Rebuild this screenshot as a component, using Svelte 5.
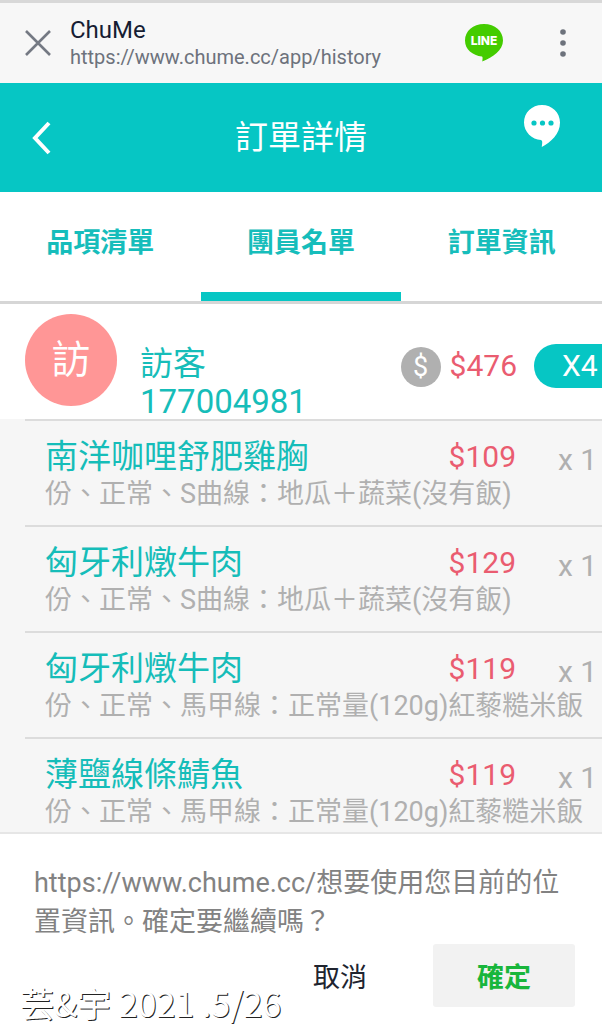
<script lang="ts">
  const tabs = ['品項清單', '團員名單', '訂單資訊'];
  let activeTab = $state(1);
  let askLocation = $state(true);

  const member = { name: '訪客 177004981', total: 476, count: 4 };

  const items = [
    { name: '南洋咖哩舒肥雞胸', note: '份、正常、S曲線：地瓜＋蔬菜(沒有飯)', price: 109, qty: 1 },
    { name: '匈牙利燉牛肉', note: '份、正常、S曲線：地瓜＋蔬菜(沒有飯)', price: 129, qty: 1 },
    { name: '匈牙利燉牛肉', note: '份、正常、馬甲線：正常量(120g)紅藜糙米飯', price: 119, qty: 1 },
    { name: '薄鹽線條鯖魚', note: '份、正常、馬甲線：正常量(120g)紅藜糙米飯', price: 119, qty: 1 },
  ];
</script>

<div class="app">
  <header class="browser">
    <button class="icon" aria-label="關閉">
      <svg width="26" height="26" viewBox="0 0 26 26">
        <path d="M1 1L25 25M25 1L1 25" stroke="#747983" stroke-width="2.6" fill="none" />
      </svg>
    </button>
    <div class="page-info">
      <div class="site">ChuMe</div>
      <div class="url">https://www.chume.cc/app/history</div>
    </div>
    <button class="icon" aria-label="LINE">
      <svg width="40" height="38" viewBox="0 0 40 38">
        <path d="M20 0C9 0 1 7 1 16.500C1 25.500 8.500 31.500 18 32.500C19 33 18.500 35 18.300 37.500C29 33 39 26 39 16.500C39 7 31 0 20 0Z" fill="#4c0" />
        <text x="20" y="21" text-anchor="middle" font-family="Inter, sans-serif" font-weight="800" font-size="12" fill="#fff">LINE</text>
      </svg>
    </button>
    <button class="icon more" aria-label="更多">
      <svg width="6" height="28" viewBox="0 0 6 28" fill="#6d727c">
        <circle cx="3" cy="3" r="2.800" />
        <circle cx="3" cy="14" r="2.800" />
        <circle cx="3" cy="25" r="2.800" />
      </svg>
    </button>
  </header>

  <div class="title-bar">
    <button class="icon" aria-label="返回">
      <svg width="20" height="36" viewBox="0 0 20 36">
        <path d="M17 3L3 18L17 33" stroke="#fff" stroke-width="4" fill="none" />
      </svg>
    </button>
    <h1>訂單詳情</h1>
    <button class="icon chat" aria-label="訊息">
      <svg width="38" height="44" viewBox="0 0 38 44">
        <path d="M19 1C9 1 1 8.500 1 18.500C1 28 9 35.500 18 36C20 37 19 40 18.800 43C28 38 37 30 37 18.500C37 8.500 29 1 19 1Z" fill="#fff" />
        <g fill="#06c6c4">
          <circle cx="11" cy="19" r="2.600" />
          <circle cx="19.500" cy="19" r="2.600" />
          <circle cx="28" cy="19" r="2.600" />
        </g>
      </svg>
    </button>
  </div>

  <nav class="tabs">
    {#each tabs as tab, i}
      <button class:active={activeTab === i} onclick={() => (activeTab = i)}>{tab}</button>
    {/each}
  </nav>

  <main>
    <section class="member">
      <div class="avatar">訪</div>
      <div class="member-row">
        <h2>{member.name}</h2>
        <span class="coin">$</span>
        <span class="price">${member.total}</span>
        <span class="count">X{member.count}</span>
      </div>
    </section>

    <ul class="items">
      {#each items as item}
        <li>
          <div class="line">
            <h3>{item.name}</h3>
            <span class="price">${item.price}</span>
            <span class="qty">x {item.qty}</span>
          </div>
          <p>{item.note}</p>
        </li>
      {/each}
    </ul>
  </main>

  {#if askLocation}
    <div class="prompt" role="dialog" aria-labelledby="prompt-text">
      <p id="prompt-text">https://www.chume.cc/想要使用您目前的位置資訊。確定要繼續嗎？</p>
      <div class="actions">
        <button onclick={() => (askLocation = false)}>取消</button>
        <button class="ok" onclick={() => (askLocation = false)}>確定</button>
      </div>
    </div>
  {/if}

  <div class="signature">芸&amp;宇 2021 .5/26</div>
</div>

<style>
  :global(body) {
    margin: 0;
    background: #fff;
  }

  .app {
    position: relative;
    display: flex;
    flex-direction: column;
    min-height: 100vh;
    overflow-x: clip;
    font-family: Roboto, 'Noto Sans CJK TC', sans-serif;
  }

  button {
    padding: 0;
    border: none;
    background: none;
    font-family: inherit;
    cursor: pointer;
  }

  h1, h2, h3, p, ul {
    margin: 0;
    padding: 0;
    font-weight: 400;
  }

  .icon {
    display: flex;
    flex: none;
  }

  .browser {
    display: flex;
    align-items: center;
    box-sizing: border-box;
    height: 83px;
    padding: 0 36px 0 25px;
    border-top: 3px solid #d8d8d8;
    background: #f7f7f7;
  }

  .page-info {
    flex: 1;
    min-width: 0;
    margin-left: 19px;
  }

  .site {
    font-size: 24px;
    line-height: 28px;
    color: #161d33;
  }

  .url {
    font-size: 20px;
    line-height: 26px;
    color: #6d727c;
  }

  .more {
    margin-left: 56px;
  }

  .title-bar {
    display: flex;
    align-items: center;
    box-sizing: border-box;
    height: 109px;
    padding: 0 41px 0 32px;
    background: #06c6c4;
  }

  h1 {
    flex: 1;
    margin-left: 27px;
    font-size: 33px;
    line-height: 48px;
    text-align: center;
    color: #fff;
  }

  .chat {
    margin-bottom: 24px;
  }

  .tabs {
    display: flex;
    border-bottom: 3px solid #d6d6d6;
    background: #fff;
  }

  .tabs button {
    flex: 1;
    height: 109px;
    padding-bottom: 4px;
    border-bottom: 9px solid transparent;
    font-size: 27px;
    font-weight: 700;
    color: #16bdbb;
  }

  .tabs .active {
    border-bottom-color: #06c6c4;
  }

  .member {
    display: flex;
    height: 115px;
    padding-left: 25px;
    background: #fff;
  }

  .avatar {
    flex: none;
    width: 92px;
    height: 92px;
    margin: 10px 23px 0 0;
    border-radius: 50%;
    background: #ff9696;
    font-size: 39px;
    line-height: 92px;
    text-align: center;
    color: #fff;
  }

  /* the count pill runs past the right edge */
  .member-row {
    display: flex;
    flex: 1;
    align-items: flex-start;
    min-width: 0;
    margin-right: -28px;
    padding-top: 40px;
  }

  h2 {
    width: 200px;
    margin: 1px auto 0 0;
    font-size: 33px;
    line-height: 38px;
    color: #16bdb9;
  }

  .coin {
    width: 40px;
    margin: 3px 9px 0 0;
    border-radius: 50%;
    background: #b0b0b0;
    font-size: 27px;
    line-height: 40px;
    text-align: center;
    color: #fff;
  }

  .price {
    font-size: 30px;
    line-height: 44px;
    color: #ea5c70;
  }

  .count {
    width: 68px;
    margin-left: 17px;
    padding-left: 28px;
    border-radius: 22px;
    background: #06c6c4;
    font-size: 30px;
    line-height: 44px;
    color: #fff;
  }

  .items {
    background: #f6f6f6;
    list-style: none;
  }

  li {
    box-sizing: border-box;
    height: 106px;
    margin-left: 25px;
    padding: 17px 8px 0 20px;
    border-top: 2px solid #dcdcdc;
  }

  li:last-child {
    height: 95px;
  }

  .line {
    display: flex;
    align-items: center;
    height: 38px;
  }

  h3 {
    flex: 1;
    font-size: 33px;
    line-height: 38px;
    color: #16bdb9;
  }

  .qty {
    width: 36px;
    margin-left: 42px;
    padding-top: 4px;
    font-size: 30px;
    color: #b0b0b0;
    white-space: nowrap;
  }

  li p {
    font-size: 27px;
    line-height: 36px;
    color: #b0b0b0;
    white-space: nowrap;
  }

  .prompt {
    flex: 1;
    padding: 30px 27px 17px 34px;
    border-top: 2px solid #e6e6e6;
    background: #fff;
  }

  .prompt p {
    font-size: 27px;
    line-height: 39px;
    color: #828282;
    overflow-wrap: anywhere;
  }

  .actions {
    display: flex;
    justify-content: flex-end;
    margin-top: 2px;
  }

  .actions button {
    width: 142px;
    height: 63px;
    margin-left: 22px;
    border-radius: 3px;
    font-size: 27px;
    color: #20242f;
  }

  .actions .ok {
    background: #f2f2f2;
    font-weight: 700;
    color: #18b63c;
  }

  /* signature lies over the lower left corner */
  .signature {
    position: absolute;
    left: 20px;
    bottom: 0;
    font-family: 'Noto Sans CJK TC', sans-serif;
    font-size: 34px;
    line-height: 42px;
    color: #fff;
    text-shadow: 1px 1px 0 #222;
  }
</style>
